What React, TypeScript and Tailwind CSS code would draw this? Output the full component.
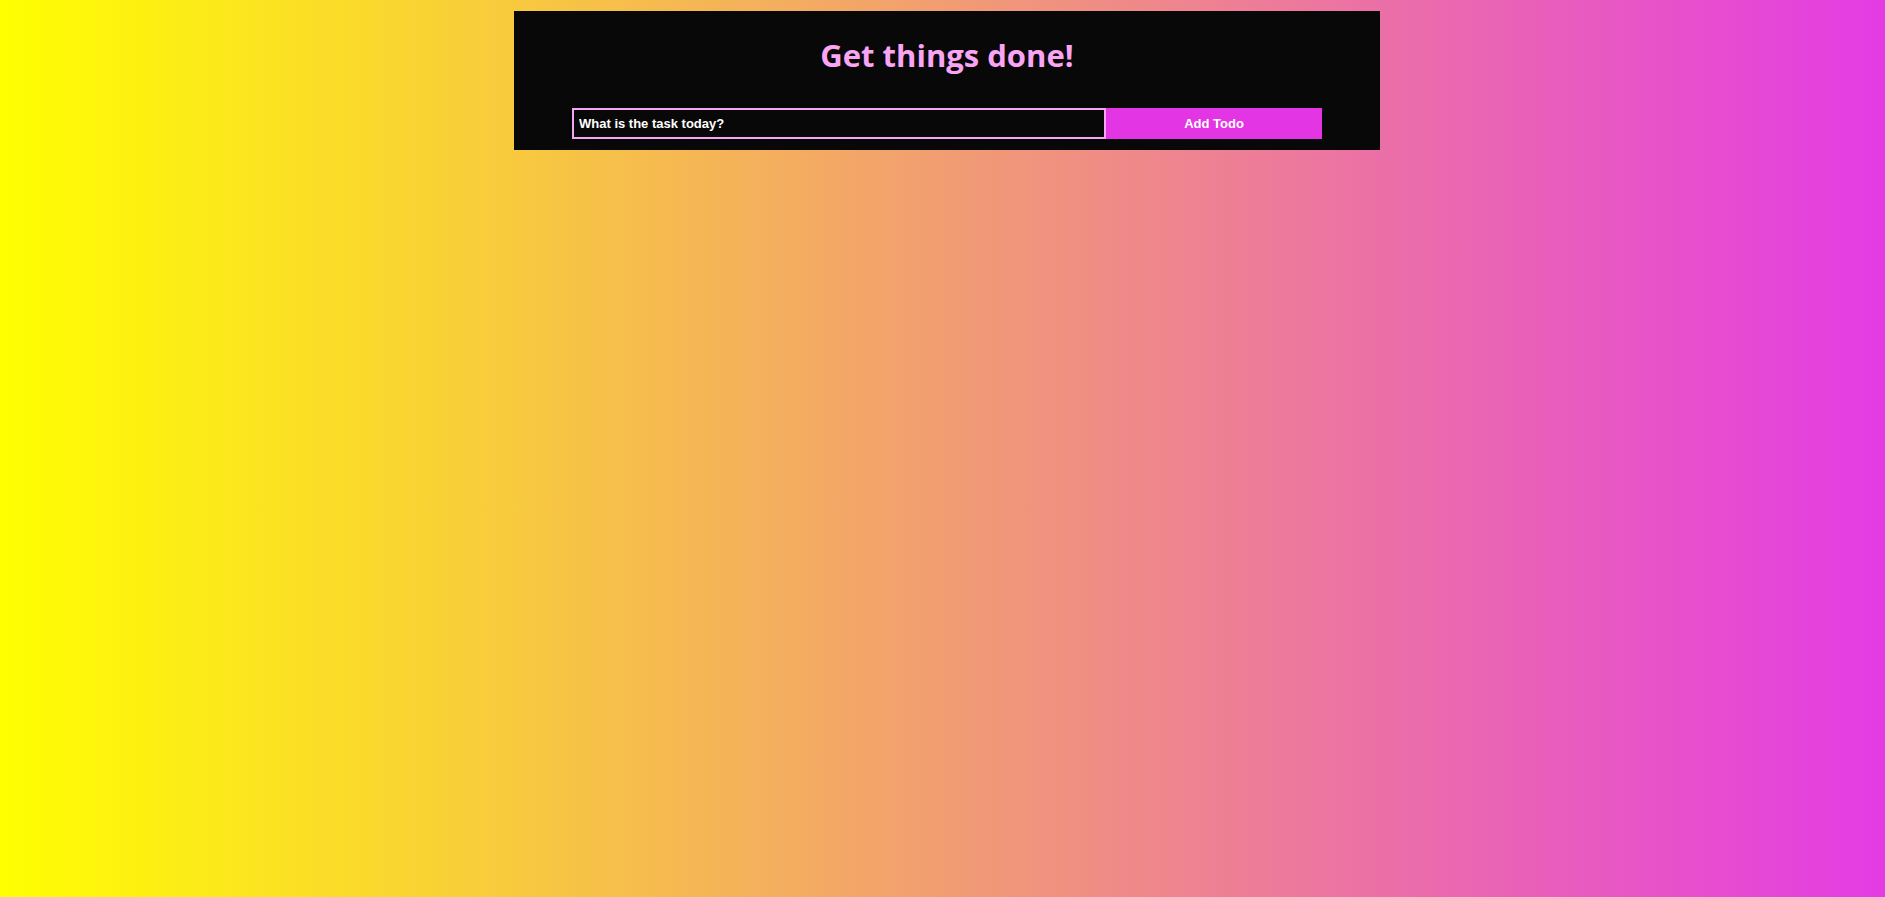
export default function App() {
  return (
    <div className="min-h-screen w-full bg-linear-to-r/srgb from-[#ffff00] to-[#e43be4] pt-[11px]">
      <div className="ml-[514px] flex w-[866px] flex-col items-center bg-[#080808] pt-[24px] pb-[11px]">
        <h1 className="text-[31px] leading-[40px] font-bold text-[#f9a5f4] [font-family:'Open_Sans',sans-serif]">
          Get things done!
        </h1>
        <form className="mt-[33px] flex w-[750px]" onSubmit={(e) => e.preventDefault()}>
          <input
            type="text"
            placeholder="What is the task today?"
            className="h-[31px] flex-1 border-2 border-[#f9a5f4] bg-[#080808] px-[5px] text-[13px] font-bold text-white outline-none placeholder:text-white [font-family:'Liberation_Sans',Arial,sans-serif]"
          />
          <button
            type="submit"
            className="h-[31px] w-[216px] bg-[#e335e3] text-[13px] font-bold text-white [font-family:'Liberation_Sans',Arial,sans-serif]"
          >
            Add Todo
          </button>
        </form>
      </div>
    </div>
  );
}
